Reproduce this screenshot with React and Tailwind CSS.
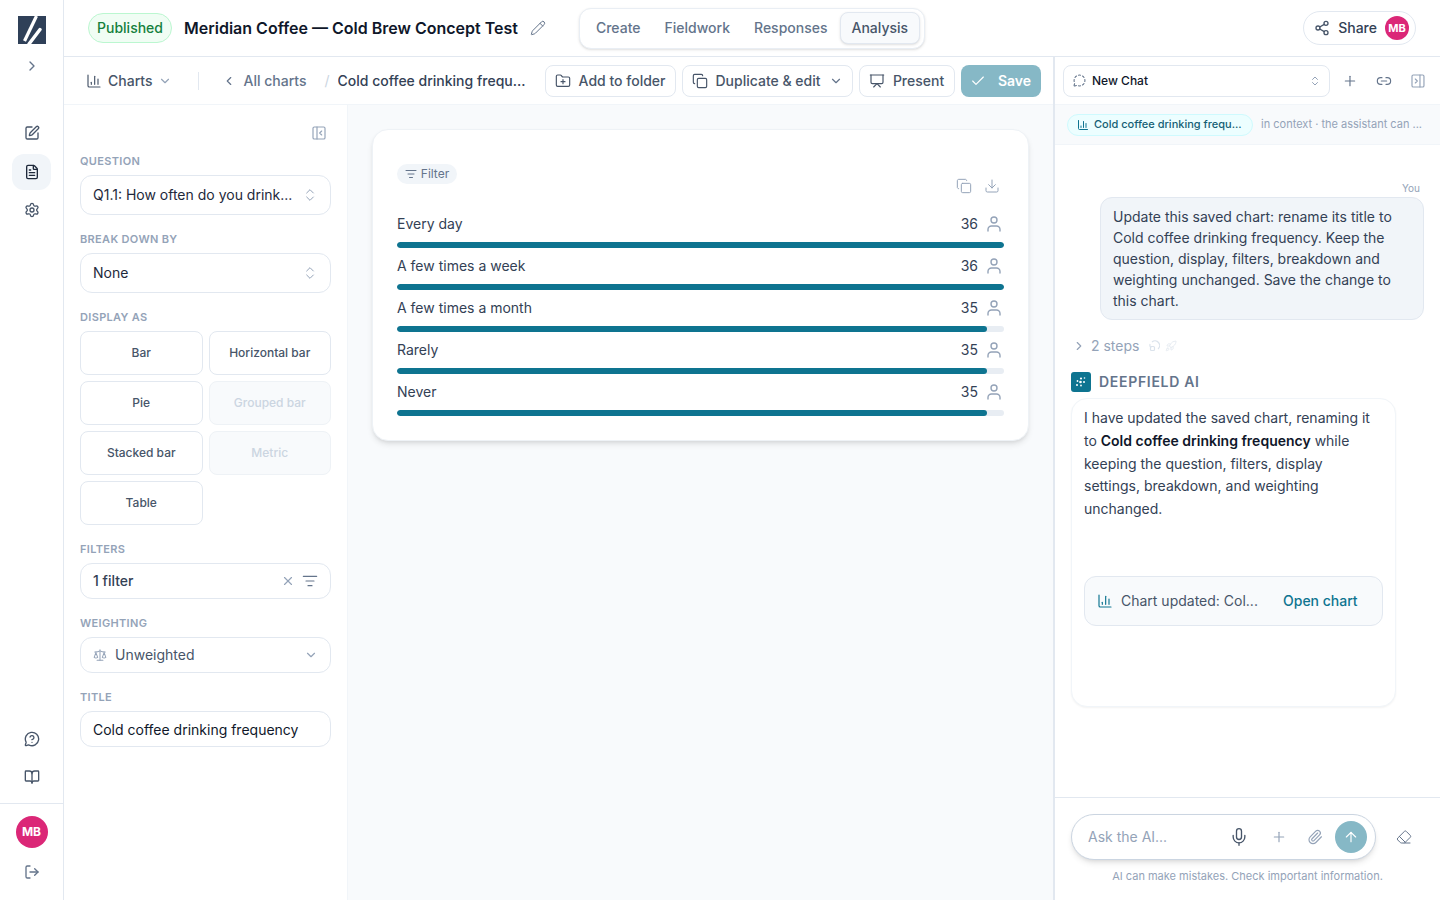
import React from "react";
import {
  ChartColumn, SquarePen, FileText, Settings, MessageCircleQuestion, BookOpen, LogOut, ChevronRight, ChevronLeft,
  ChevronDown, ChevronsUpDown, PanelLeftClose, PanelRightClose, Pencil, Share2, FolderPlus, Copy, Presentation,
  Check, Plus, Link2, ListFilter, Download, X, Scale, Mic, Paperclip, ArrowUp, Eraser, MessageCircleDashed, Rocket,
} from "lucide-react";

const font = { fontFamily: '"Inter","Noto Sans",sans-serif' };

function Logo() {
  return (
    <svg width="28" height="28" viewBox="0 0 28 28">
      <rect width="28" height="28" fill="#2f4058" />
      <path d="M6.5 25 L18.5 0" stroke="#fff" strokeWidth="3.2" fill="none" />
      <path d="M11 28 L22 13.5" stroke="#fff" strokeWidth="3.4" strokeLinecap="round" fill="none" />
    </svg>
  );
}

function AiMark() {
  return (
    <svg width="20" height="20" viewBox="0 0 20 20">
      <rect width="20" height="20" rx="3" fill="#0e7490" />
      <g fill="#fff">
        <circle cx="10" cy="6.5" r="1.1" />
        <circle cx="13.5" cy="6" r="0.8" />
        <circle cx="6.5" cy="9" r="0.9" />
        <circle cx="9.5" cy="10" r="1.3" />
        <circle cx="13" cy="10" r="1" />
        <circle cx="6" cy="13" r="1" />
        <circle cx="10" cy="13.5" r="0.9" />
      </g>
    </svg>
  );
}

function StepMark() {
  return (
    <svg width="12" height="12" viewBox="0 0 12 12" fill="none" stroke="#dbe3ec" strokeWidth="1.2">
      <path d="M4 2 a4.5 4.5 0 1 1 6 7" />
      <path d="M2 4 a4 4 0 0 0 1 4" />
      <rect x="2.5" y="6.5" width="4" height="4" rx="1" />
    </svg>
  );
}

function Person() {
  return (
    <svg width="16" height="18" viewBox="0 0 16 18" fill="none" stroke="#94a3b8" strokeWidth="1.4" strokeLinecap="round">
      <circle cx="8" cy="5" r="3" />
      <path d="M2 16 v-1.5 a3.5 3.5 0 0 1 3.5 -3.5 h5 a3.5 3.5 0 0 1 3.5 3.5 V16" />
    </svg>
  );
}

function Rail() {
  return (
    <aside className="flex h-[900px] w-16 shrink-0 flex-col items-center border-r border-[#e2e8f0] bg-white">
      <div className="mt-4"><Logo /></div>
      <ChevronRight className="mt-[14px] h-4 w-4 text-[#64748b]" />
      <div className="mt-[41px] flex h-9 w-full items-center justify-center">
        <SquarePen className="h-4 w-4 text-[#475569]" />
      </div>
      <div className="mt-[3px] flex h-9 w-[39px] items-center justify-center rounded-xl bg-[#f1f5f9]">
        <FileText className="h-4 w-4 text-[#1e293b]" />
      </div>
      <div className="mt-[2px] flex h-9 w-full items-center justify-center">
        <Settings className="h-4 w-4 text-[#475569]" />
      </div>
      <div className="flex-1" />
      <div className="flex h-9 w-full items-center justify-center">
        <MessageCircleQuestion className="h-4 w-4 text-[#475569]" />
      </div>
      <div className="mt-[2px] flex h-9 w-full items-center justify-center">
        <BookOpen className="h-4 w-4 text-[#475569]" />
      </div>
      <div className="mt-2 flex h-[97px] w-full flex-col items-center border-t border-[#e2e8f0] pt-3">
        <div className="flex h-8 w-8 items-center justify-center rounded-full bg-[#db2777] text-xs font-bold text-white">MB</div>
        <LogOut className="mt-4 h-4 w-4 text-[#64748b]" />
      </div>
    </aside>
  );
}

function Tab({ children, active }) {
  return (
    <div className={active
      ? "flex h-8 items-center rounded-lg border border-[#e2e8f0] bg-[#f8fafc] px-[11px] text-sm font-medium text-[#475569] shadow-sm"
      : "flex h-8 items-center px-3 text-sm font-medium text-[#64748b]"}>
      {children}
    </div>
  );
}

function Header() {
  return (
    <header className="flex h-[57px] shrink-0 items-center border-b border-[#e2e8f0] bg-white pl-6 pr-6">
      <div className="flex h-[30px] w-[84px] items-center justify-center rounded-full border border-[#bbf7d0] bg-[#f0fdf4] text-sm font-medium text-[#15803d]">Published</div>
      <div className="ml-3 text-base font-semibold text-[#0f172a]">Meridian Coffee — Cold Brew Concept Test</div>
      <Pencil className="ml-3 h-4 w-4 text-[#64748b]" strokeWidth={1.5} />
      <div className="ml-[33px] flex h-[41px] items-center rounded-xl border border-[#e9eef4] bg-white px-1 shadow-sm">
        <Tab>Create</Tab>
        <Tab>Fieldwork</Tab>
        <Tab>Responses</Tab>
        <Tab active>Analysis</Tab>
      </div>
      <div className="flex-1" />
      <div className="flex h-[34px] items-center rounded-full border border-[#e2e8f0] bg-white pl-[10px] pr-[6px]">
        <Share2 className="h-4 w-4 text-[#475569]" />
        <span className="ml-2 text-sm font-medium text-[#334155]">Share</span>
        <div className="ml-2 flex h-6 w-6 items-center justify-center rounded-full bg-[#db2777] text-[11px] font-bold text-white">MB</div>
      </div>
    </header>
  );
}

function ToolBtn({ icon: Icon, children, right, w }) {
  return (
    <div className={`flex h-8 items-center justify-center gap-2 rounded-lg border border-[#e2e8f0] bg-white text-sm font-medium text-[#475569] ${w}`}>
      <Icon className="h-4 w-4 text-[#475569]" strokeWidth={1.75} />
      <span>{children}</span>
      {right}
    </div>
  );
}

function Toolbar() {
  return (
    <div className="flex h-12 shrink-0 items-center border-b border-[#f1f5f9] bg-white pl-[22px] pr-3">
      <ChartColumn className="h-4 w-4 text-[#475569]" strokeWidth={1.75} />
      <span className="ml-[6px] text-sm font-medium text-[#475569]">Charts</span>
      <ChevronDown className="ml-[6px] h-[14px] w-[14px] text-[#94a3b8]" />
      <div className="ml-[26px] h-[18px] w-px bg-[#e2e8f0]" />
      <ChevronLeft className="ml-[23px] h-[14px] w-[14px] text-[#64748b]" />
      <span className="ml-[7px] text-sm font-medium text-[#64748b]">All charts</span>
      <span className="ml-[18px] text-sm text-[#cbd5e1]">/</span>
      <span className="ml-[8px] w-[189px] truncate text-sm font-medium text-[#334155]">Cold coffee drinking frequ...</span>
      <div className="ml-[18px] flex items-center gap-[6px]">
        <ToolBtn icon={FolderPlus} w="w-[131px]">Add to folder</ToolBtn>
        <ToolBtn icon={Copy} w="w-[171px]" right={<ChevronDown className="ml-0 h-[14px] w-[14px] text-[#64748b]" />}>Duplicate &amp; edit</ToolBtn>
        <ToolBtn icon={Presentation} w="w-[96px]">Present</ToolBtn>
        <div className="flex h-8 w-20 items-center justify-center gap-3 rounded-lg bg-[#86b8c6] text-sm font-semibold text-white">
          <Check className="h-4 w-4" strokeWidth={1.75} />
          <span>Save</span>
        </div>
      </div>
    </div>
  );
}

function Label({ children }) {
  return <div className="mb-[6px] flex h-4 items-center text-[11px] font-semibold uppercase tracking-[0.03em] text-[#94a3b8]">{children}</div>;
}

function Select({ children }) {
  return (
    <div className="flex h-10 items-center justify-between rounded-xl border border-[#e2e8f0] bg-white pl-3 pr-3 text-sm text-[#1e293b]">
      <span>{children}</span>
      <ChevronsUpDown className="h-4 w-4 text-[#94a3b8]" strokeWidth={1.5} />
    </div>
  );
}

function Chip({ children, disabled }) {
  return (
    <div className={disabled
      ? "flex h-11 items-center justify-center rounded-lg border border-[#eef2f6] bg-[#f8fafc] text-xs font-medium text-[#cbd5e1]"
      : "flex h-11 items-center justify-center rounded-lg border border-[#e2e8f0] bg-white text-xs font-medium text-[#475569]"}>
      {children}
    </div>
  );
}

function ConfigPanel() {
  return (
    <div className="flex w-[284px] shrink-0 flex-col border-r border-[#f1f5f9] bg-white px-4">
      <div className="flex h-12 items-center justify-end pr-1 pt-2">
        <PanelLeftClose className="h-4 w-4 text-[#94a3b8]" strokeWidth={1.75} />
      </div>
      <div className="flex w-[251px] flex-col gap-4">
        <div>
          <Label>Question</Label>
          <Select>Q1.1: How often do you drink...</Select>
        </div>
        <div>
          <Label>Break down by</Label>
          <Select>None</Select>
        </div>
        <div>
          <Label>Display as</Label>
          <div className="grid grid-cols-2 gap-[6px]">
            <Chip>Bar</Chip>
            <Chip>Horizontal bar</Chip>
            <Chip>Pie</Chip>
            <Chip disabled>Grouped bar</Chip>
            <Chip>Stacked bar</Chip>
            <Chip disabled>Metric</Chip>
            <Chip>Table</Chip>
          </div>
        </div>
        <div>
          <Label>Filters</Label>
          <div className="flex h-9 items-center rounded-xl border border-[#e2e8f0] bg-white pl-3 pr-3 text-sm font-medium text-[#334155]">
            <span className="flex-1">1 filter</span>
            <X className="h-[14px] w-[14px] text-[#94a3b8]" />
            <ListFilter className="ml-[7px] h-4 w-4 text-[#64748b]" strokeWidth={1.75} />
          </div>
        </div>
        <div>
          <Label>Weighting</Label>
          <div className="flex h-9 items-center rounded-xl border border-[#e2e8f0] bg-white pl-3 pr-3 text-sm text-[#475569]">
            <Scale className="h-[14px] w-[14px] text-[#94a3b8]" strokeWidth={1.75} />
            <span className="ml-2 flex-1">Unweighted</span>
            <ChevronDown className="h-[14px] w-[14px] text-[#94a3b8]" />
          </div>
        </div>
        <div>
          <Label>Title</Label>
          <div className="flex h-9 items-center rounded-xl border border-[#e2e8f0] bg-white pl-3 pt-px text-sm text-[#0f172a]">Cold coffee drinking frequency</div>
        </div>
      </div>
    </div>
  );
}

const rows = [
  { label: "Every day", n: 36, pct: 100 },
  { label: "A few times a week", n: 36, pct: 100 },
  { label: "A few times a month", n: 35, pct: 97.2 },
  { label: "Rarely", n: 35, pct: 97.2 },
  { label: "Never", n: 35, pct: 97.2 },
];

function ChartCard() {
  return (
    <div className="rounded-2xl border border-[#eef2f6] bg-white px-6 pb-6 pt-[34px] shadow-md">
      <div className="flex h-5 w-[60px] items-center justify-center gap-1 rounded-full bg-[#f1f5f9] text-xs text-[#64748b]">
        <ListFilter className="h-3 w-3" />
        <span>Filter</span>
      </div>
      <div className="-mt-[6px] mb-5 flex h-4 justify-end gap-3 pr-[4px]">
        <Copy className="h-4 w-4 text-[#94a3b8]" strokeWidth={1.5} />
        <Download className="h-4 w-4 text-[#94a3b8]" strokeWidth={1.5} />
      </div>
      <div className="flex flex-col gap-2">
        {rows.map((r) => (
          <div key={r.label}>
            <div className="flex h-5 items-center justify-between text-sm text-[#334155]">
              <span>{r.label}</span>
              <span className="flex items-center gap-[8px] pr-[2px]">
                {r.n}
                <Person />
              </span>
            </div>
            <div className="mt-2 h-[6px] overflow-hidden rounded-full bg-[#e8edf3]">
              <div className="h-full rounded-full bg-[#0e7490]" style={{ width: `${r.pct}%` }} />
            </div>
          </div>
        ))}
      </div>
    </div>
  );
}

function ChatPanel() {
  return (
    <div className="flex h-[843px] w-[387px] shrink-0 flex-col border-l-2 border-[#e2e8f0] bg-white">
      <div className="flex h-12 shrink-0 items-center border-b border-[#f1f5f9] pl-2 pr-[14px]">
        <div className="flex h-8 w-[268px] items-center rounded-lg border border-[#e2e8f0] bg-white pl-[9px] pr-2">
          <MessageCircleDashed className="h-[13px] w-[13px] text-[#64748b]" />
          <span className="ml-[6px] flex-1 text-xs font-medium text-[#0f172a]">New Chat</span>
          <ChevronsUpDown className="h-3 w-3 text-[#94a3b8]" />
        </div>
        <Plus className="ml-3 h-4 w-4 text-[#64748b]" strokeWidth={1.75} />
        <Link2 className="ml-[18px] h-4 w-4 text-[#64748b]" strokeWidth={1.75} />
        <PanelRightClose className="ml-[18px] h-4 w-4 text-[#94a3b8]" strokeWidth={1.75} />
      </div>
      <div className="flex h-10 shrink-0 items-center border-b border-[#f1f5f9] bg-[#f8fafc] pl-3">
        <div className="flex h-[22px] w-[186px] items-center rounded-full border border-[#cffafe] bg-[#ecfeff] pl-[9px] text-[11px] font-medium text-[#155e75]">
          <ChartColumn className="h-3 w-3 text-[#0e7490]" />
          <span className="ml-[5px]">Cold coffee drinking frequ...</span>
        </div>
        <span className="ml-2 text-[11px] text-[#94a3b8]">in context · the assistant can ...</span>
      </div>
      <div className="flex min-h-0 flex-1 flex-col px-4 pt-9">
        <div className="flex h-[14px] items-center justify-end pr-1 text-[10px] text-[#94a3b8]">You</div>
        <div className="ml-[29px] mt-[2px] w-[324px] rounded-xl border border-[#e2e8f0] bg-[#f1f5f9] pb-[8px] pl-3 pr-2 pt-[8px] text-sm leading-[21px] text-[#334155]">
          Update this saved chart: rename its title to Cold coffee drinking frequency. Keep the question, display, filters, breakdown and weighting unchanged. Save the change to this chart.
        </div>
        <div className="mt-4 flex h-5 items-center text-sm text-[#94a3b8]">
          <ChevronRight className="ml-[1px] h-[14px] w-[14px]" />
          <span className="ml-[5px]">2 steps</span>
          <span className="ml-[9px]"><StepMark /></span>
          <Rocket className="ml-[5px] h-3 w-3 text-[#e8edf3]" />
        </div>
        <div className="mt-4 flex h-5 items-center">
          <AiMark />
          <span className="ml-2 text-sm font-semibold tracking-[0.05em] text-[#64748b]">DEEPFIELD AI</span>
        </div>
        <div className="mt-[6px] h-[309px] w-[325px] rounded-2xl border border-[#f1f5f9] bg-white px-3 pt-2 shadow-xs">
          <p className="w-[291px] text-sm leading-[22.75px] text-[#334155]">
            I have updated the saved chart, renaming it to <b className="font-semibold text-[#0f172a]">Cold coffee drinking frequency</b> while keeping the question, filters, display settings, breakdown, and weighting unchanged.
          </p>
          <div className="mt-[55px] flex h-[50px] w-[299px] items-center rounded-xl border border-[#e2e8f0] bg-[#f8fafc] pl-3 text-sm">
            <ChartColumn className="h-4 w-4 text-[#0e7490]" strokeWidth={1.75} />
            <span className="ml-2 w-[137px] text-[#475569]">Chart updated: Col...</span>
            <span className="ml-[25px] font-medium text-[#0e7490]">Open chart</span>
          </div>
        </div>
      </div>
      <div className="flex h-[103px] shrink-0 flex-col border-t border-[#e2e8f0] px-4 pt-4">
        <div className="flex items-center">
          <div className="flex h-[46px] w-[305px] items-center rounded-full border border-[#cbd5e1] bg-white pl-4 pr-2 shadow-md">
            <span className="flex-1 text-sm text-[#94a3b8]">Ask the AI...</span>
            <Mic className="h-5 w-5 text-[#475569]" strokeWidth={1.6} />
            <Plus className="ml-[22px] h-4 w-4 text-[#94a3b8]" strokeWidth={1.75} />
            <Paperclip className="ml-5 h-4 w-4 text-[#94a3b8]" strokeWidth={1.75} />
            <div className="ml-3 flex h-8 w-8 items-center justify-center rounded-full bg-[#86b8c6]">
              <ArrowUp className="h-4 w-4 text-white" strokeWidth={1.75} />
            </div>
          </div>
          <Eraser className="ml-5 h-4 w-4 text-[#64748b]" strokeWidth={1.5} />
        </div>
        <div className="mt-2 flex h-4 items-center justify-center text-[11px] text-[#94a3b8]">AI can make mistakes. Check important information.</div>
      </div>
    </div>
  );
}

export default function App() {
  return (
    <div className="flex h-[900px] w-[1440px] overflow-hidden bg-white" style={font}>
      <Rail />
      <div className="flex min-w-0 flex-1 flex-col">
        <Header />
        <div className="flex min-h-0 flex-1">
          <div className="flex min-w-0 flex-1 flex-col">
            <Toolbar />
            <div className="flex min-h-0 flex-1">
              <ConfigPanel />
              <main className="min-w-0 flex-1 bg-[#f8fafc] pl-6 pr-6 pt-6">
                <ChartCard />
              </main>
            </div>
          </div>
          <ChatPanel />
        </div>
      </div>
    </div>
  );
}
